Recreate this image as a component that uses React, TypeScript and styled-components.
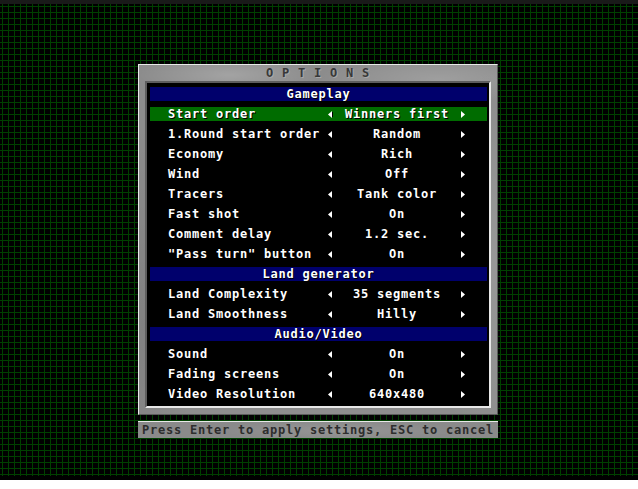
import React from "react";
import styled, { createGlobalStyle } from "styled-components";

const Global = createGlobalStyle`
  html, body { margin: 0; padding: 0; background: #ffffff; }
  #root { width: 638px; }
`;

const Screen = styled.div`
  width: 638px;
  height: 480px;
  box-sizing: border-box;
  border-top: 4px solid #1a1a1a;
  border-bottom: 4px solid #000;
  background-color: #000;
  background-image:
    linear-gradient(to right, #004000 1px, transparent 1px),
    linear-gradient(to bottom, #004000 1px, transparent 1px);
  background-size: 6px 6px;
  background-position: 2px 2px;
  background-clip: padding-box;
  display: flex;
  flex-direction: column;
  align-items: flex-start;
  padding: 60px 0 0 138px;
  gap: 6px;
  font-family: "DejaVu Sans Mono", "Liberation Mono", monospace;
  font-weight: bold;
  font-size: 12px;
  letter-spacing: 0.78px;
`;

const Panel = styled.div`
  width: 360px;
  box-sizing: border-box;
  border-top: 1px solid #e8e8e8;
  border-left: 1px solid #e8e8e8;
  border-right: 1px solid #5a5a5a;
  border-bottom: 1px solid #5a5a5a;
  background-color: #8c8c8c;
  background-image:
    radial-gradient(ellipse 90px 20px at 90px 10px, rgba(255,255,255,0.2), transparent),
    radial-gradient(ellipse 120px 25px at 300px 14px, rgba(255,255,255,0.16), transparent),
    radial-gradient(ellipse 60px 200px at 352px 200px, rgba(255,255,255,0.1), transparent),
    radial-gradient(ellipse 50px 200px at 4px 260px, rgba(0,0,0,0.08), transparent);
  padding: 0 6px 6px 6px;
  display: flex;
  flex-direction: column;
`;

const Title = styled.div`
  height: 16px;
  line-height: 16px;
  text-align: center;
  color: #383838;
  text-shadow: 1px 1px 0 #a8a8a8;
  white-space: pre;
`;

const Inner = styled.div`
  background: #000;
  border-top: 2px solid #5e5e5e;
  border-left: 2px solid #5e5e5e;
  border-right: 2px solid #e8e8e8;
  border-bottom: 2px solid #e8e8e8;
  padding: 4px 2px 5px 3px;
  display: flex;
  flex-direction: column;
  gap: 6px;
`;

const Header = styled.div`
  height: 14px;
  line-height: 14px;
  background: #00006c;
  color: #fff;
  text-align: center;
  text-shadow: 1px 1px 0 #000;
  white-space: pre;
`;

const Row = styled.div<{ $active?: boolean }>`
  height: 14px;
  line-height: 14px;
  background: ${(p) => (p.$active ? "#006c00" : "transparent")};
  color: #fff;
  text-shadow: 1px 1px 0 #000;
  display: grid;
  grid-template-columns: 18px 160px 6px 126px 6px 1fr;
  align-items: center;
  white-space: pre;
`;

const Label = styled.span`
  grid-column: 2;
`;

const Value = styled.span`
  grid-column: 4;
  text-align: center;
`;

const Arrow = styled.svg`
  display: block;
  width: 5px;
  height: 7px;
`;

const Status = styled.div`
  width: 360px;
  height: 17px;
  line-height: 16px;
  box-sizing: border-box;
  border-top: 1px solid #e8e8e8;
  background-color: #8a8a8a;
  background-image: radial-gradient(ellipse 120px 10px at 200px 8px, rgba(255,255,255,0.1), transparent);
  color: #2e2e2e;
  text-align: center;
  white-space: pre;
`;

const LeftArrow = () => (
  <Arrow viewBox="0 0 5 7" style={{ gridColumn: 3 }}>
    <polygon points="4,0 4,7 0,3.5" fill="#fff" />
    <rect x="4" y="1" width="1" height="5" fill="#000" />
  </Arrow>
);

const RightArrow = () => (
  <Arrow viewBox="0 0 5 7" style={{ gridColumn: 5 }}>
    <polygon points="1,0 1,7 5,3.5" fill="#fff" />
  </Arrow>
);

type Item =
  | { kind: "header"; text: string }
  | { kind: "row"; label: string; value: string; active?: boolean };

const items: Item[] = [
  { kind: "header", text: "Gameplay" },
  { kind: "row", label: "Start order", value: "Winners first", active: true },
  { kind: "row", label: "1.Round start order", value: "Random" },
  { kind: "row", label: "Economy", value: "Rich" },
  { kind: "row", label: "Wind", value: "Off" },
  { kind: "row", label: "Tracers", value: "Tank color" },
  { kind: "row", label: "Fast shot", value: "On" },
  { kind: "row", label: "Comment delay", value: "1.2 sec." },
  { kind: "row", label: "\"Pass turn\" button", value: "On" },
  { kind: "header", text: "Land generator" },
  { kind: "row", label: "Land Complexity", value: "35 segments" },
  { kind: "row", label: "Land Smoothness", value: "Hilly" },
  { kind: "header", text: "Audio/Video" },
  { kind: "row", label: "Sound", value: "On" },
  { kind: "row", label: "Fading screens", value: "On" },
  { kind: "row", label: "Video Resolution", value: "640x480" },
];

export default function App() {
  return (
    <>
      <Global />
      <Screen>
        <Panel>
          <Title>O P T I O N S</Title>
          <Inner>
            {items.map((it, i) =>
              it.kind === "header" ? (
                <Header key={i}>{it.text}</Header>
              ) : (
                <Row key={i} $active={it.active}>
                  <Label>{it.label}</Label>
                  <LeftArrow />
                  <Value>{it.value}</Value>
                  <RightArrow />
                </Row>
              )
            )}
          </Inner>
        </Panel>
        <Status>Press Enter to apply settings, ESC to cancel</Status>
      </Screen>
    </>
  );
}
